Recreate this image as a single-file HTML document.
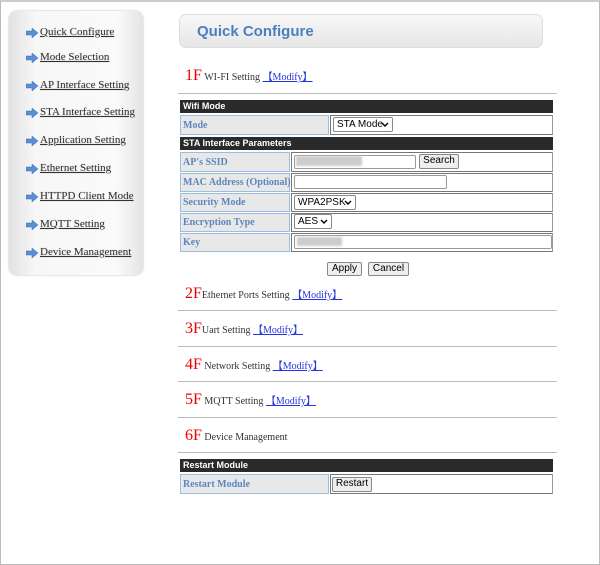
<!DOCTYPE html>
<html><head><meta charset="utf-8"><style>
*{margin:0;padding:0;box-sizing:border-box}
body{width:600px;height:565px;background:#fff;position:relative;overflow:hidden;font-family:"Liberation Serif",serif}
.frame{position:absolute;left:0;top:0;width:600px;height:565px;border:1px solid #bbb;border-top:2px solid #ccc}
.a{position:absolute}
.side{left:9px;top:11px;width:134px;height:264px;border-radius:8px;background:linear-gradient(90deg,#e2e2e2,#f7f7f7 20%,#fafafa 80%,#e4e4e4);box-shadow:0 0 2px #bbb}
.nav{position:absolute;left:26px;font-size:11px;color:#333;white-space:nowrap;text-shadow:0 0 1px #bbb}
.nav svg{position:absolute;left:0;top:2px}
.nav span{position:absolute;left:14px;top:0;text-decoration:underline}
.hdr{left:179px;top:14px;width:364px;height:34px;border-radius:7px;border:1px solid #ddd;background:linear-gradient(#f8f8f8,#e6e6e6);}
.hdr b{position:absolute;left:17px;top:8px;font:bold 15px "Liberation Sans",sans-serif;color:#4a80c2}
.fl{position:absolute;left:185px;font-size:10px;color:#333;white-space:nowrap}
.fl i{font-style:normal;color:#e00;font-size:16px}
.fl u{color:#2233dd}
.hr{position:absolute;left:178px;width:379px;height:1px;background:#bbb}
.bar{position:absolute;left:180px;width:373px;height:13px;background:#2a2a2a;color:#fff;font:bold 9px "Liberation Sans",sans-serif;padding:1px 3px}
.lab{position:absolute;left:180px;background:#e8e8e8;border:1px solid #9bbde0;color:#5b87be;font:bold 10px "Liberation Serif",serif;padding:0 2px;white-space:nowrap;display:flex;align-items:center}
.val{position:absolute;border:1px solid #777;background:#fff;border-right-color:#999}
.in{position:absolute;border:1px solid #999;border-radius:2px;background:#fff;height:14px}
.sel{position:absolute;border:1px solid #888;border-radius:2px;background:#fff;height:15px;font:10px "Liberation Sans",sans-serif;padding:0 3px;line-height:13px}
.sel svg{position:absolute;right:3px;top:4px}
.btn{position:absolute;border:1px solid #888;border-radius:2px;background:#eee;height:14px;font:10px "Liberation Sans",sans-serif;text-align:center;line-height:12px}
.blur{position:absolute;background:#ccc;filter:blur(1px)}
</style></head><body>
<div class="frame"></div>
<div class="a side"></div>
<svg width="0" height="0" style="position:absolute"><defs><g id="ar"><path d="M0 3h6V0l6 5-6 5V7H0z" fill="#5a8fd6" stroke="#3a6fb0" stroke-width=".5"/></g><path id="cv" d="M1 1l3 3 3-3" fill="none" stroke="#000" stroke-width="1.4"/></defs></svg>
<div class="nav" style="top:26px"><svg width="12" height="10"><use href="#ar"/></svg><span>Quick Configure</span></div>
<div class="nav" style="top:51px"><svg width="12" height="10"><use href="#ar"/></svg><span>Mode Selection</span></div>
<div class="nav" style="top:79px"><svg width="12" height="10"><use href="#ar"/></svg><span>AP Interface Setting</span></div>
<div class="nav" style="top:106px"><svg width="12" height="10"><use href="#ar"/></svg><span>STA Interface Setting</span></div>
<div class="nav" style="top:134px"><svg width="12" height="10"><use href="#ar"/></svg><span>Application Setting</span></div>
<div class="nav" style="top:162px"><svg width="12" height="10"><use href="#ar"/></svg><span>Ethernet Setting</span></div>
<div class="nav" style="top:190px"><svg width="12" height="10"><use href="#ar"/></svg><span>HTTPD Client Mode</span></div>
<div class="nav" style="top:218px"><svg width="12" height="10"><use href="#ar"/></svg><span>MQTT Setting</span></div>
<div class="nav" style="top:246px"><svg width="12" height="10"><use href="#ar"/></svg><span>Device Management</span></div>

<div class="a hdr"><b>Quick Configure</b></div>

<div class="fl" style="top:67px"><i>1F</i> WI-FI Setting <u>【Modify】</u></div>
<div class="hr" style="top:93px"></div>
<div class="bar" style="top:100px">Wifi Mode</div>
<div class="lab" style="top:115px;width:149px;height:20px">Mode</div>
<div class="val" style="left:330px;top:115px;width:223px;height:20px"></div>
<div class="sel" style="left:333px;top:117px;width:60px">STA Mode<svg width="8" height="6"><use href="#cv"/></svg></div>
<div class="bar" style="top:137px">STA Interface Parameters</div>

<div class="lab" style="top:152px;width:110px;height:20px">AP's SSID</div>
<div class="val" style="left:291px;top:152px;width:262px;height:20px"></div>
<div class="in" style="left:294px;top:155px;width:122px"></div>
<div class="blur" style="left:296px;top:156px;width:66px;height:10px"></div>
<div class="btn" style="left:419px;top:154px;width:40px;height:15px">Search</div>

<div class="lab" style="top:173px;width:110px;height:19px">MAC Address (Optional)</div>
<div class="val" style="left:291px;top:173px;width:262px;height:19px"></div>
<div class="in" style="left:294px;top:175px;width:153px"></div>

<div class="lab" style="top:193px;width:110px;height:19px">Security Mode</div>
<div class="val" style="left:291px;top:193px;width:262px;height:19px"></div>
<div class="sel" style="left:294px;top:195px;width:62px">WPA2PSK<svg width="8" height="6"><use href="#cv"/></svg></div>

<div class="lab" style="top:213px;width:110px;height:19px">Encryption Type</div>
<div class="val" style="left:291px;top:213px;width:262px;height:19px"></div>
<div class="sel" style="left:294px;top:214px;width:38px">AES<svg width="8" height="6"><use href="#cv"/></svg></div>

<div class="lab" style="top:233px;width:110px;height:19px">Key</div>
<div class="val" style="left:291px;top:233px;width:262px;height:19px"></div>
<div class="in" style="left:294px;top:235px;width:258px"></div>
<div class="blur" style="left:297px;top:237px;width:45px;height:9px"></div>

<div class="btn" style="left:327px;top:262px;width:35px">Apply</div>
<div class="btn" style="left:368px;top:262px;width:41px">Cancel</div>

<div class="fl" style="top:285px"><i>2F</i>Ethernet Ports Setting <u>【Modify】</u></div>
<div class="hr" style="top:310px"></div>
<div class="fl" style="top:320px"><i>3F</i>Uart Setting <u>【Modify】</u></div>
<div class="hr" style="top:346px"></div>
<div class="fl" style="top:356px"><i>4F</i> Network Setting <u>【Modify】</u></div>
<div class="hr" style="top:381px"></div>
<div class="fl" style="top:391px"><i>5F</i> MQTT Setting <u>【Modify】</u></div>
<div class="hr" style="top:417px"></div>
<div class="fl" style="top:427px"><i>6F</i> Device Management</div>
<div class="hr" style="top:452px"></div>
<div class="bar" style="top:459px">Restart Module</div>
<div class="lab" style="top:474px;width:149px;height:20px">Restart Module</div>
<div class="val" style="left:330px;top:474px;width:223px;height:20px"></div>
<div class="btn" style="left:332px;top:477px;width:40px;height:15px">Restart</div>
</body></html>
